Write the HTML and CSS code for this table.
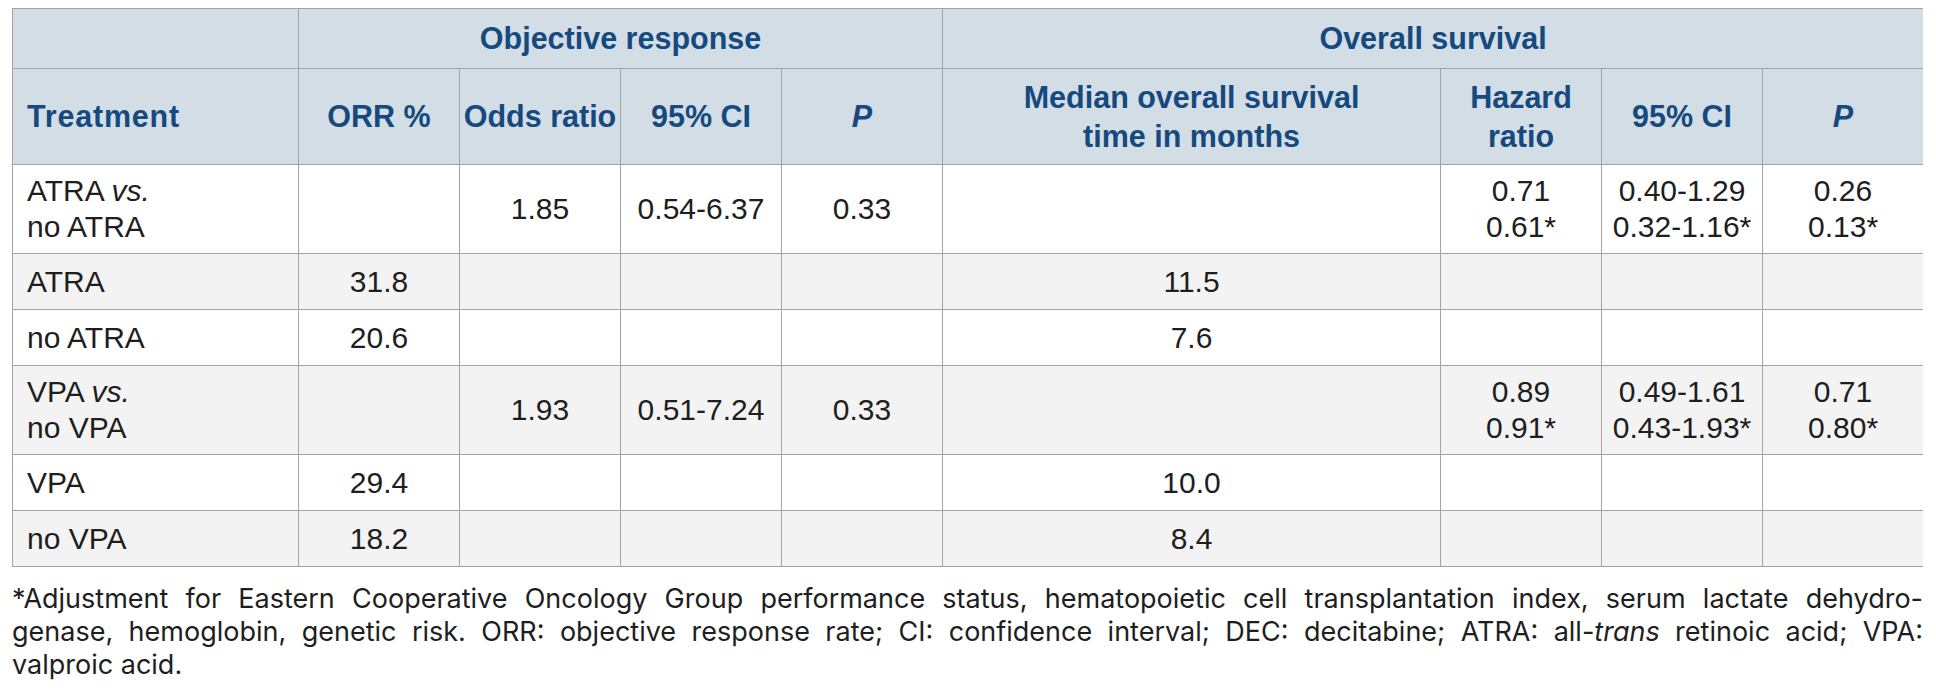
FILE: index.html
```html
<!DOCTYPE html>
<html lang="en">
<head>
<meta charset="utf-8">
<title>Objective response and overall survival</title>
<link rel="stylesheet" href="styles.css">
</head>
<body>
<table class="results">
  <colgroup>
    <col class="c-treat">
    <col class="c-num"><col class="c-num"><col class="c-num"><col class="c-num">
    <col class="c-median">
    <col class="c-num"><col class="c-num"><col class="c-num">
  </colgroup>
  <thead>
    <tr class="group-row">
      <th></th>
      <th colspan="4">Objective response</th>
      <th colspan="4">Overall survival</th>
    </tr>
    <tr class="col-row">
      <th class="left">Treatment</th>
      <th>ORR %</th>
      <th>Odds ratio</th>
      <th>95% CI</th>
      <th><i>P</i></th>
      <th>Median overall survival<br>time in months</th>
      <th>Hazard<br>ratio</th>
      <th>95% CI</th>
      <th><i>P</i></th>
    </tr>
  </thead>
  <tbody>
    <tr>
      <td class="left">ATRA <i>vs.</i><br>no ATRA</td>
      <td></td>
      <td>1.85</td>
      <td>0.54-6.37</td>
      <td>0.33</td>
      <td></td>
      <td>0.71<br>0.61*</td>
      <td>0.40-1.29<br>0.32-1.16*</td>
      <td>0.26<br>0.13*</td>
    </tr>
    <tr class="alt">
      <td class="left">ATRA</td>
      <td>31.8</td>
      <td></td><td></td><td></td>
      <td>11.5</td>
      <td></td><td></td><td></td>
    </tr>
    <tr>
      <td class="left">no ATRA</td>
      <td>20.6</td>
      <td></td><td></td><td></td>
      <td>7.6</td>
      <td></td><td></td><td></td>
    </tr>
    <tr class="alt">
      <td class="left">VPA <i>vs.</i><br>no VPA</td>
      <td></td>
      <td>1.93</td>
      <td>0.51-7.24</td>
      <td>0.33</td>
      <td></td>
      <td>0.89<br>0.91*</td>
      <td>0.49-1.61<br>0.43-1.93*</td>
      <td>0.71<br>0.80*</td>
    </tr>
    <tr>
      <td class="left">VPA</td>
      <td>29.4</td>
      <td></td><td></td><td></td>
      <td>10.0</td>
      <td></td><td></td><td></td>
    </tr>
    <tr class="alt">
      <td class="left">no VPA</td>
      <td>18.2</td>
      <td></td><td></td><td></td>
      <td>8.4</td>
      <td></td><td></td><td></td>
    </tr>
  </tbody>
</table>
<p class="footnote">
  <span class="line just">*Adjustment for Eastern Cooperative Oncology Group performance status, hematopoietic cell transplantation index, serum lactate dehydro-</span>
  <span class="line just">genase, hemoglobin, genetic risk. ORR: objective response rate; CI: confidence interval; DEC: decitabine; ATRA: all-<i>trans</i> retinoic acid; VPA:</span>
  <span class="line">valproic acid.</span>
</p>
</body>
</html>
```

FILE: styles.css
```css
html, body {
  background: #ffffff;
}

body {
  margin: 8px 13px 0 12px;
  font-family: "Liberation Sans", Arial, sans-serif;
  color: #1e1e1e;
}

.results {
  width: 1911px;
  border-collapse: collapse;
  table-layout: fixed;
  border: 1px solid #a3a3a3;
}

.c-treat { width: 286px; }
.c-num { width: 161px; }
.c-median { width: 498px; }

.results th,
.results td {
  border: 1px solid #a3a3a3;
  text-align: center;
  vertical-align: middle;
}

.results th {
  background: #d3dde6;
  color: #164a7e;
  font-weight: bold;
  font-size: 30.5px;
  line-height: 39px;
  white-space: nowrap;
  padding: 0 2px;
}

.results th.left {
  letter-spacing: 0.8px;
}

.group-row th {
  height: 59px;
  padding-top: 0;
  padding-bottom: 0;
}

.col-row th {
  height: 95px;
}

.results td {
  font-size: 30px;
  line-height: 36px;
  padding: 8px 6px;
  height: 39px;
}

.results .left {
  text-align: left;
  padding-left: 14px;
}

.results tr.alt td {
  background: #f3f3f3;
}

.footnote {
  margin: 15px 0 0 0;
  font-family: Inter, "Open Sans", sans-serif;
  font-size: 27px;
  line-height: 33px;
  color: #1e1e1e;
}

.footnote .line {
  display: block;
}

.footnote .just {
  text-align: justify;
  text-align-last: justify;
}
```
